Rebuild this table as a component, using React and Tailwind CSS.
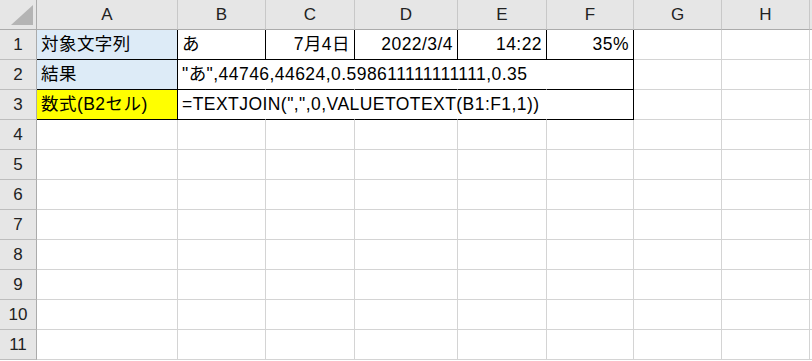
import React from "react";

const COLS = ["A", "B", "C", "D", "E", "F", "G", "H"];
const WIDTHS = ["w-[141px]", "w-[88px]", "w-[89px]", "w-[103px]", "w-[89px]", "w-[87px]", "w-[88px]", "w-[88px]"];

const GRID = "border-r-[#d4d4d4] border-b-[#d4d4d4]";
const BOX = "border-r-black border-b-black";
const OPEN = "border-r-transparent border-b-black";

// Per-row cell definitions for the filled block A1:F3
const DATA = {
  1: [
    { text: "対象文字列", cls: `${BOX} bg-[#ddebf7]` },
    { text: "あ", cls: BOX },
    { text: "7月4日", cls: BOX, right: true },
    { text: "2022/3/4", cls: BOX, right: true },
    { text: "14:22", cls: BOX, right: true },
    { text: "35%", cls: BOX, right: true },
  ],
  2: [
    { text: "結果", cls: `${BOX} bg-[#ddebf7]` },
    { text: "\"あ\",44746,44624,0.598611111111111,0.35", cls: OPEN },
    { text: "", cls: OPEN },
    { text: "", cls: OPEN },
    { text: "", cls: OPEN },
    { text: "", cls: BOX },
  ],
  3: [
    { text: "数式(B2セル)", cls: `${BOX} bg-[#ffff00]` },
    { text: "=TEXTJOIN(\",\",0,VALUETOTEXT(B1:F1,1))", cls: OPEN },
    { text: "", cls: OPEN },
    { text: "", cls: OPEN },
    { text: "", cls: OPEN },
    { text: "", cls: BOX },
  ],
};

function HeaderRow() {
  return (
    <div className="flex h-[30px]">
      <div className="relative w-[37px] shrink-0 border-r border-b border-r-[#ababab] border-b-[#ababab] bg-[#e6e6e6]">
        <svg className="absolute left-[11px] top-[5px]" width="22" height="20" viewBox="0 0 22 20">
          <polygon points="22,0 22,20 0,20" fill="#b4b4b4" />
        </svg>
      </div>
      {COLS.map((c, i) => (
        <div
          key={c}
          className={`${WIDTHS[i]} shrink-0 border-r border-b border-r-[#c8c8c8] border-b-[#ababab] bg-[#e6e6e6] flex items-center justify-center text-[17px] text-[#222]`}
        >
          {c}
        </div>
      ))}
      <div className="flex-1 border-b border-b-[#ababab] bg-[#e6e6e6]" />
    </div>
  );
}

function Row({ n }) {
  const cells = DATA[n] || [];
  return (
    <div className="flex h-[30px]">
      <div className="w-[37px] shrink-0 border-r border-b border-r-[#ababab] border-b-[#bdbdbd] bg-[#e6e6e6] flex items-center justify-center text-[17px] text-[#222]">
        {n}
      </div>
      {COLS.map((c, i) => {
        const d = cells[i];
        const cls = d ? d.cls : GRID;
        return (
          <div
            key={c}
            className={`${WIDTHS[i]} shrink-0 border-r border-b ${cls} flex items-center whitespace-nowrap text-[17.5px] tracking-[0.45px] text-black ${
              d && d.right ? "justify-end pr-[4px]" : "pl-[4px]"
            }`}
          >
            {d && d.text ? <span className="leading-none">{d.text}</span> : null}
          </div>
        );
      })}
      <div className="flex-1 border-b border-b-[#d4d4d4]" />
    </div>
  );
}

export default function App() {
  return (
    <div className="w-[812px] h-[361px] overflow-hidden bg-white font-['Liberation_Sans','Noto_Sans_CJK_JP',sans-serif]">
      <HeaderRow />
      {Array.from({ length: 11 }, (_, i) => (
        <Row key={i} n={i + 1} />
      ))}
    </div>
  );
}
